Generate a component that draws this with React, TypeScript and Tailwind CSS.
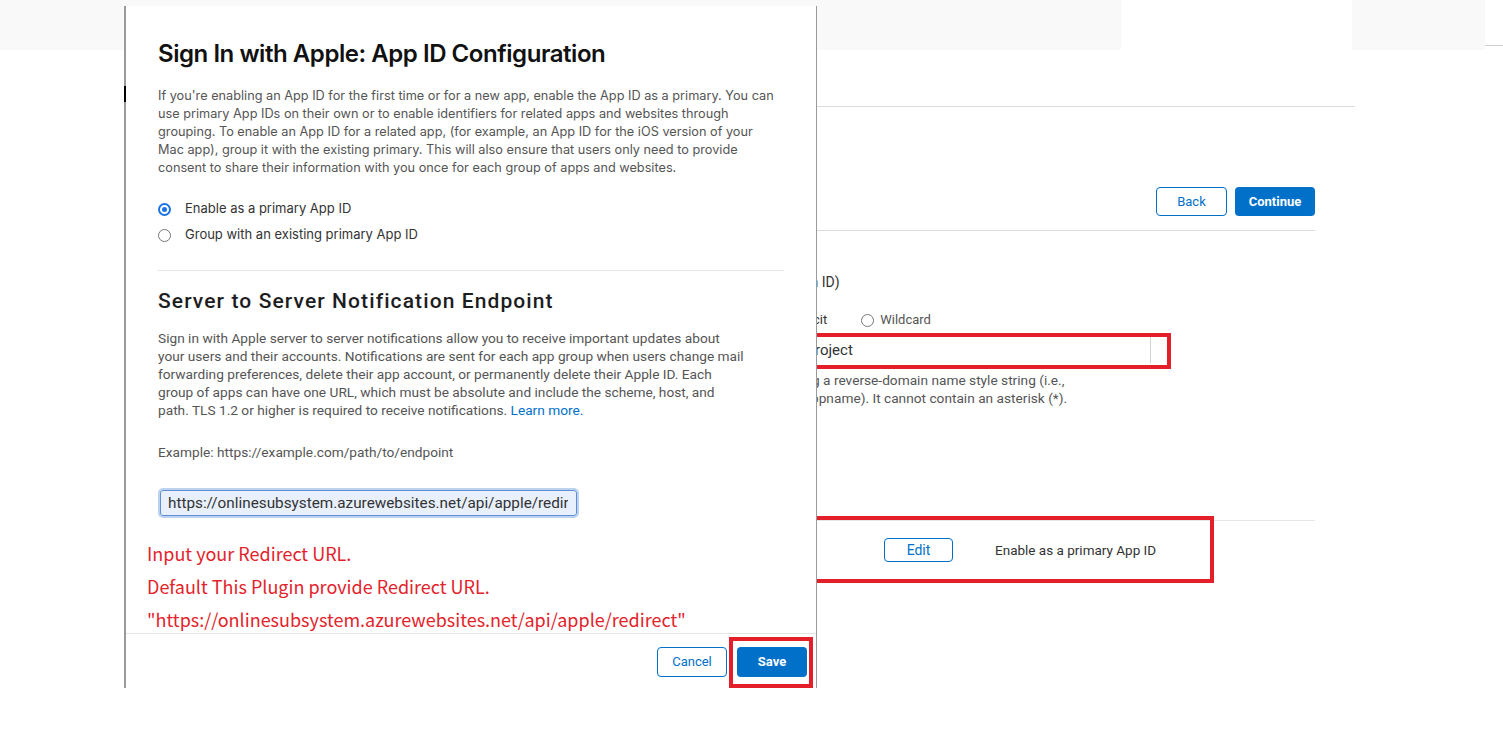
import React from "react";

const blue = "#0070c9";

function Radio({ checked }: { checked?: boolean }) {
  return checked ? (
    <span className="flex h-[13px] w-[13px] shrink-0 items-center justify-center rounded-full border-[2px] border-[#1a73e8] bg-white">
      <span className="h-[5px] w-[5px] rounded-full bg-[#1a73e8]" />
    </span>
  ) : (
    <span className="block h-[13px] w-[13px] shrink-0 rounded-full border border-[#767676] bg-white" />
  );
}

// text of the page behind the modal, only its tail shows past the modal edge
function Tail({ w, cut, rest }: { w: string; cut: string; rest: string }) {
  return (
    <>
      <span className={`${w} shrink-0 text-right`}>{cut}</span>
      <span className="whitespace-nowrap">{rest}</span>
    </>
  );
}

function BackgroundPage() {
  return (
    <div className="flex flex-col font-['Roboto',sans-serif] text-[13px] text-[#333]">
      {/* top band */}
      <div className="flex h-[50px]">
        <div className="w-[1121px] bg-[#f9f9f9]" />
        <div className="w-[231px] bg-white" />
        <div className="w-[133px] bg-[#f9f9f9]" />
        <div className="flex-1 pt-[45px]">
          <div className="border-t border-[#cfcfcf]" />
        </div>
      </div>

      <div className="ml-[300px] mt-[56px] w-[1055px] border-t border-[#dcdcdc]" />

      <div className="ml-[300px] w-[1015px]">
        <div className="mt-[80px] flex justify-end gap-[8px]">
          <button className="h-[29px] w-[71px] rounded-[4px] border border-[#0070c9] bg-white text-[13px] text-[#0070c9]">
            Back
          </button>
          <button className="h-[29px] w-[80px] rounded-[4px] bg-[#0070c9] text-[13px] font-bold text-white">
            Continue
          </button>
        </div>
        <div className="mt-[14px] border-t border-[#dcdcdc]" />

        <div className="mt-[42px] flex h-[18px] items-center text-[14px] leading-[18px]">
          <Tail w="w-[506px]" cut="a" rest="m ID)" />
        </div>

        <div className="mt-[20px] flex h-[18px] items-center leading-[18px]">
          <Tail w="w-[513px]" cut="i" rest="cit" />
          <span className="ml-[34px]">
            <Radio />
          </span>
          <span className="ml-[6px] text-[#555]">Wildcard</span>
        </div>

        <div className="mt-[8px] flex h-[26px] w-[851px] items-center border-r border-[#d2d2d2] text-[15px]">
          <Tail w="w-[515px]" cut="P" rest="roject" />
        </div>

        <div className="mt-[8px] flex text-[13.7px] leading-[18px] text-[#555]">
          <Tail w="w-[512px]" cut="n" rest="g a reverse-domain name style string (i.e.," />
        </div>
        <div className="flex text-[13.7px] leading-[18px] text-[#555]">
          <Tail w="w-[511px]" cut="a" rest="ppname). It cannot contain an asterisk (*)." />
        </div>

        <div className="mt-[113px] border-t border-[#e6e6e6]" />
        <div className="mt-[17px] flex items-center">
          <button className="ml-[584px] h-[24px] w-[69px] rounded-[4px] border border-[#0070c9] bg-white text-[14px] text-[#0070c9]">
            Edit
          </button>
          <span className="ml-[42px] text-[13.5px] text-[#333]">Enable as a primary App ID</span>
        </div>
      </div>
    </div>
  );
}

function Modal() {
  return (
    <div className="absolute left-[124px] top-[6px] flex h-[682px] w-[693px] flex-col border-l-2 border-r border-[#9a9a9a] bg-white">
      <div className="h-[627px] px-[32px] pt-[32px]">
        <h1 className="font-['Inter',sans-serif] text-[24px] font-semibold leading-[32px] tracking-[-0.45px] text-[#111]">
          Sign In with Apple: App ID Configuration
        </h1>
        <div className="mt-[17px] font-['Inter',sans-serif] text-[12.73px] leading-[18px] text-[#555]">
          <div className="whitespace-nowrap">
            If you're enabling an App ID for the first time or for a new app, enable the App ID as a primary. You can
          </div>
          <div className="whitespace-nowrap">
            use primary App IDs on their own or to enable identifiers for related apps and websites through
          </div>
          <div className="whitespace-nowrap">
            grouping. To enable an App ID for a related app, (for example, an App ID for the iOS version of your
          </div>
          <div className="whitespace-nowrap">
            Mac app), group it with the existing primary. This will also ensure that users only need to provide
          </div>
          <div className="whitespace-nowrap">
            consent to share their information with you once for each group of apps and websites.
          </div>
        </div>

        <div className="mt-[19px] flex flex-col font-['Inter',sans-serif] text-[13px] text-[#333]">
          <label className="flex h-[26px] items-center gap-[14px]">
            <Radio checked />
            <span>Enable as a primary App ID</span>
          </label>
          <label className="flex h-[26px] items-center gap-[14px]">
            <Radio />
            <span>Group with an existing primary App ID</span>
          </label>
        </div>

        <div className="mt-[22px] border-t border-[#e5e5e5]" />

        <h2 className="mt-[16px] font-['Roboto',sans-serif] text-[21px] font-medium leading-[28px] tracking-[1.1px] text-[#1d1d1f]">
          Server to Server Notification Endpoint
        </h2>
        <div className="mt-[14px] font-['Roboto',sans-serif] text-[13.7px] leading-[18px] text-[#555]">
          <div className="whitespace-nowrap">
            Sign in with Apple server to server notifications allow you to receive important updates about
          </div>
          <div className="whitespace-nowrap">
            your users and their accounts. Notifications are sent for each app group when users change mail
          </div>
          <div className="whitespace-nowrap">
            forwarding preferences, delete their app account, or permanently delete their Apple ID. Each
          </div>
          <div className="whitespace-nowrap">
            group of apps can have one URL, which must be absolute and include the scheme, host, and
          </div>
          <div className="whitespace-nowrap">
            path. TLS 1.2 or higher is required to receive notifications.{" "}
            <a className="text-[#0070c9]">Learn more.</a>
          </div>
        </div>
        <div className="mt-[24px] font-['Roboto',sans-serif] text-[13.7px] leading-[18px] text-[#555]">
          Example: https://example.com/path/to/endpoint
        </div>

        <div className="mt-[27px] w-[421px] rounded-[5px] border-[2px] border-[#bcd3f0]">
          <div className="flex h-[26px] items-center rounded-[3px] border border-[#5f8fd0] bg-[#e8f0fe] pl-[7px] pr-[8px] font-['Roboto',sans-serif] text-[15.3px] text-[#333]">
            <span className="overflow-hidden whitespace-nowrap">
              https://onlinesubsystem.azurewebsites.net/api/apple/redirect
            </span>
          </div>
        </div>

        <div className="-ml-[11px] mt-[19px] font-['Noto_Sans_CJK_KR','Noto_Sans',sans-serif] text-[18px] leading-[33px] text-[#e3232b]">
          <div>Input your Redirect URL.</div>
          <div>Default This Plugin provide Redirect URL.</div>
          <div>"https://onlinesubsystem.azurewebsites.net/api/apple/redirect"</div>
        </div>
      </div>

      <div className="flex flex-1 items-start justify-end gap-[10px] border-t border-[#e5e5e5] pr-[9px] pt-[13px] font-['Roboto',sans-serif] text-[13px]">
        <button className="h-[30px] w-[70px] rounded-[4px] border border-[#0070c9] bg-white text-[#0070c9]">
          Cancel
        </button>
        <div className="relative">
          <button
            className="h-[30px] w-[70px] rounded-[4px] font-bold text-white"
            style={{ backgroundColor: blue }}
          >
            Save
          </button>
          <div className="pointer-events-none absolute -bottom-[11px] -left-[8px] -right-[6px] -top-[10px] border-[4px] border-[#e3202a]" />
        </div>
      </div>
    </div>
  );
}

export default function App() {
  return (
    <div className="relative h-[737px] w-[1503px] overflow-hidden bg-white">
      <BackgroundPage />
      {/* annotation boxes over the page */}
      <div className="absolute left-[700px] top-[333px] h-[36px] w-[471px] border-[4px] border-[#e3202a]" />
      <div className="absolute left-[700px] top-[516px] h-[67px] w-[514px] border-[4px] border-[#e3202a]" />
      <Modal />
      <div className="absolute left-[124px] top-[86px] h-[16px] w-[2px] bg-black" />
    </div>
  );
}
